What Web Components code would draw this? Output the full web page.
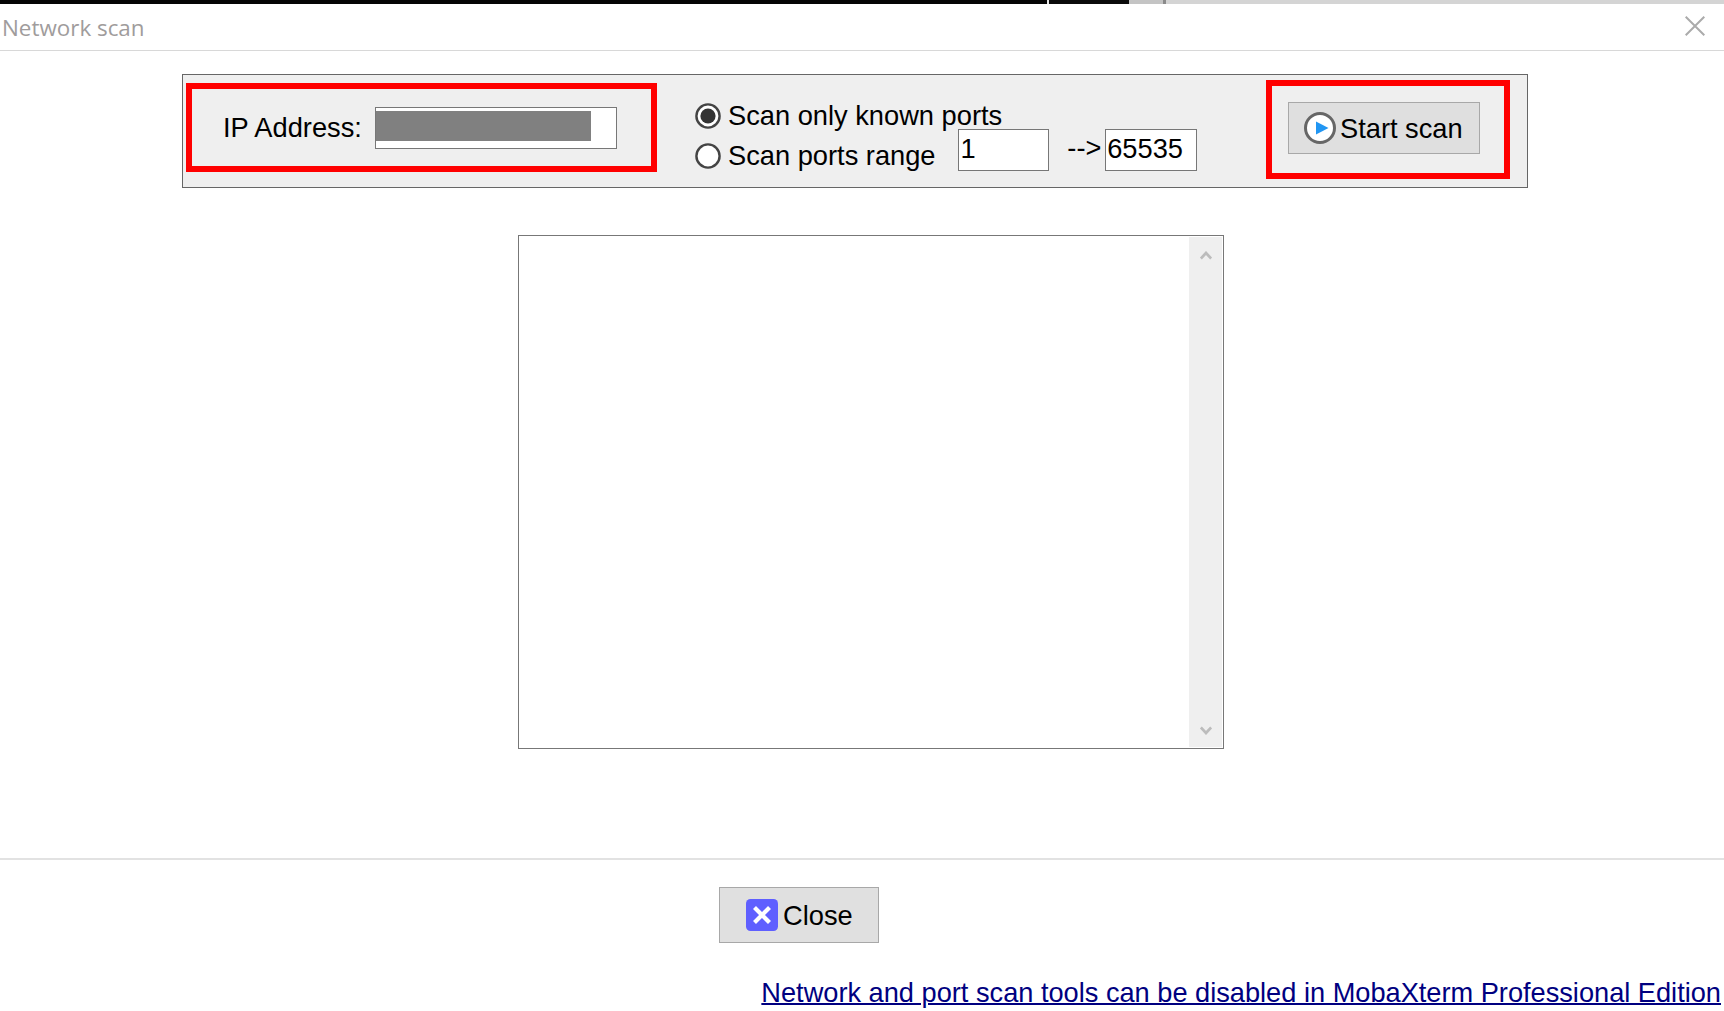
<!DOCTYPE html>
<html lang="en"><head><meta charset="utf-8"><title>Network scan</title>
<style>
html,body{margin:0;padding:0;background:#fff;overflow:hidden}
body{width:1724px;height:1011px;font:27.25px "Liberation Sans",Arial,sans-serif;color:#000}
</style></head><body>
<scan-dialog></scan-dialog>
<script>
function el(name, css, html){
  customElements.define(name, class extends HTMLElement{
    constructor(){super();this.attachShadow({mode:'open'}).innerHTML='<style>'+css+'</style>'+html;}
  });
}
el('top-strip',`:host{display:flex;height:4px;background:#fff}
 i{display:block;height:4px}
 .a{width:1047px;background:#050505}.b{width:2px;background:#e8e8e8}.c{width:80px;background:#0a0a0a}
 .d{width:34px;background:#c4c4c4}.e{width:3px;background:#8a8a8a}.f{flex:1;background:#d4d4d4}`,
 `<i class="a"></i><i class="b"></i><i class="c"></i><i class="d"></i><i class="e"></i><i class="f"></i>`);
el('title-bar',`:host{display:flex;align-items:center;justify-content:space-between;height:46px;border-bottom:1px solid #d8d8d8;box-sizing:content-box;padding:0 19px 0 2px;color:#a09c9c;font:22.4px "Open Sans",sans-serif}
 svg{display:block;width:20px;height:20px;margin-top:-2px}
 span{margin-top:1px}`,
 `<span><slot></slot></span><svg viewBox="0 0 20 20"><path d="M.7.7 19.3 19.3M19.3.7.7 19.3" stroke="#ababab" stroke-width="2" fill="none"/></svg>`);
el('red-box',`:host{display:block;position:absolute;box-sizing:border-box;border:6px solid #f00;pointer-events:none}`,``);
el('text-field',`:host{display:block;box-sizing:border-box;background:#fff;border:1px solid #777;height:42px;line-height:38px;white-space:nowrap;overflow:hidden}`,`<slot></slot>`);
el('radio-dot',`:host{display:block;width:26px;height:26px;flex:none}
 svg{display:block;width:26px;height:26px}`,
 `<svg viewBox="0 0 26 26"><circle cx="13" cy="13" r="11.6" fill="#fff" stroke="#444" stroke-width="2.4"/><circle class="d" cx="13" cy="13" r="7.6" fill="#333"/></svg>`);
el('radio-row',`:host{display:flex;align-items:flex-start;height:26px;line-height:26px;white-space:nowrap}
 .lab{margin-left:7px}`,`<slot name="dot"></slot><span class="lab"><slot></slot></span><slot name="rest"></slot>`);
el('flat-button',`:host{display:flex;box-sizing:border-box;align-items:center;background:#dfdfdf;border:1px solid #a8a8a8;white-space:nowrap}
 ::slotted(svg){display:block;flex:none}`,`<slot></slot>`);
el('scan-panel',`:host{display:flex;position:relative;box-sizing:border-box;width:1346px;height:114px;background:#efefef;border:1px solid #666;margin-left:182px}
 .ip{display:flex;align-items:flex-start;margin-left:40px;margin-top:27px;width:433px}
 .iplab{line-height:30px;margin-top:11px;width:152px;flex:none;white-space:nowrap}
 .ipf{width:242px;margin-top:5px;height:42px}
 .mask{display:block;height:30px;width:215px;margin-top:3px;background:#808080}
 .opts{margin-left:39px;margin-top:28px;display:flex;flex-direction:column;gap:14px;width:502px}
 .port{margin-top:-14px;width:92px}
 .p1{margin-left:22px;padding-left:2px}.p2{padding-left:1px}
 .arrow{margin-left:18px;width:38px;line-height:26px;margin-top:-8px}
 flat-button{margin-left:91px;margin-top:27px;width:192px;height:52px;padding-left:15px}
 flat-button span{margin-left:4px;margin-top:2px}
 .b1{left:3px;top:8px;width:471px;height:89px}
 .b2{left:1083px;top:5px;width:244px;height:99px}`,
 `<div class="ip"><span class="iplab">IP Address:</span><text-field class="ipf"><span class="mask"></span></text-field></div>
  <div class="opts">
   <radio-row><radio-dot slot="dot"></radio-dot>Scan only known ports</radio-row>
   <radio-row id="r2"><radio-dot slot="dot" id="off"></radio-dot>Scan ports range
     <text-field slot="rest" class="port p1">1</text-field><span slot="rest" class="arrow">--&gt;</span><text-field slot="rest" class="port p2">65535</text-field></radio-row>
  </div>
  <flat-button><svg width="32" height="32" viewBox="0 0 32 32"><circle cx="16" cy="16" r="14.5" fill="#fff" stroke="#666" stroke-width="3"/><path d="M12 9.5 24.5 16 12 22.5Z" fill="#2196f3"/></svg><span>Start scan</span></flat-button>
  <red-box class="b1"></red-box><red-box class="b2"></red-box>`);
el('list-box',`:host{display:flex;justify-content:flex-end;box-sizing:border-box;width:706px;height:514px;margin:47px 0 0 518px;background:#fff;border:1px solid #777;padding:1px}
 .bar{width:33px;background:#efefef;display:flex;flex-direction:column;justify-content:space-between;align-items:center;padding:14px 0 12px}
 svg{display:block;width:12px;height:9px}`,
 `<div class="bar"><svg viewBox="0 0 12 9"><path d="M.8 7.6 6 2l5.2 5.6" fill="none" stroke="#bcbcbc" stroke-width="2.8"/></svg><svg viewBox="0 0 12 9"><path d="M.8 1.4 6 7l5.2-5.6" fill="none" stroke="#bcbcbc" stroke-width="2.8"/></svg></div>`);
el('dialog-footer',`:host{display:flex;flex-direction:column;border-top:2px solid #e2e2e2;margin-top:109px}
 flat-button{width:160px;height:56px;margin:27px 0 0 719px;padding-left:26px;background:#e0e0e0;border-width:1.5px}
 flat-button span{margin-left:5px;margin-top:2px}
 a{align-self:flex-end;margin:34px 3px 0 0;line-height:32px;font-size:27.2px;color:#000080;text-decoration:underline;text-decoration-thickness:2px;white-space:nowrap}`,
 `<flat-button><svg width="32" height="32" viewBox="0 0 32 32"><rect width="32" height="32" rx="4.5" fill="#5f5fff"/><path d="M8.5 8.5 23.5 23.5M23.5 8.5 8.5 23.5" stroke="#fff" stroke-width="4.2"/></svg><span>Close</span></flat-button>
  <a href="#">Network and port scan tools can be disabled in MobaXterm Professional Edition</a>`);
el('scan-dialog',`:host{display:block;width:1724px;height:1011px;overflow:hidden}
 scan-panel{margin-top:23px}`,
 `<top-strip></top-strip><title-bar>Network scan</title-bar><scan-panel></scan-panel><list-box></list-box><dialog-footer></dialog-footer>`);
const off=document.querySelector('scan-dialog').shadowRoot.querySelector('scan-panel').shadowRoot.getElementById('off');
off.shadowRoot.querySelector('.d').setAttribute('fill','none');
</script>
</body></html>
